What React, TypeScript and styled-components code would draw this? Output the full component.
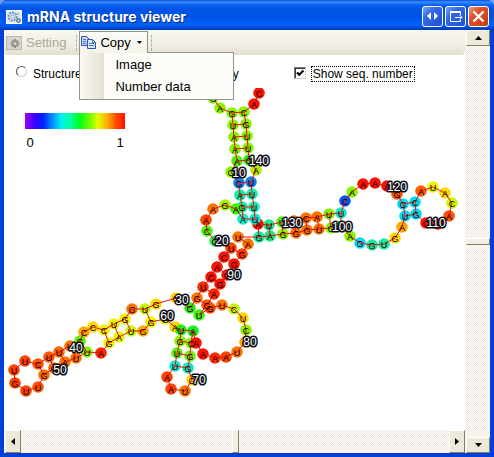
import React from "react";
import styled, { createGlobalStyle, css } from "styled-components";

const GlobalStyle = createGlobalStyle`
  * { box-sizing: border-box; }
  body {
    margin: 0;
    background: #7ba2e7;
    font-family: "Liberation Sans", Arial, sans-serif;
    font-size: 13px;
    color: #000;
  }
  button { font: inherit; color: inherit; margin: 0; }
`;

const Window = styled.main`
  display: flex;
  flex-direction: column;
  min-height: 100vh;
  border-radius: 7px 7px 0 0;
  overflow: hidden;
  background: #0040d8;
`;

const TitleBar = styled.header`
  display: flex;
  align-items: center;
  gap: 5px;
  height: 30px;
  padding: 3px 5px 0 6px;
  background: linear-gradient(
    #0a50d8 0,
    #3a8cff 2px,
    #0a62f0 5px,
    #0054e3 9px,
    #0055e8 18px,
    #0062fb 25px,
    #0048d0 28px,
    #0038b8 30px
  );
`;

const Title = styled.h1`
  flex: 1;
  margin: 0;
  font-family: Inter, "Liberation Sans", sans-serif;
  font-size: 14px;
  font-weight: bold;
  line-height: 20px;
  white-space: nowrap;
  color: #fff;
  text-shadow: 1px 1px 0 #0a2a80;
`;

const CaptionButtons = styled.div`
  display: flex;
  gap: 2px;
`;

const CaptionButton = styled.button<{ $close?: boolean }>`
  display: block;
  width: 21px;
  height: 21px;
  padding: 0;
  border: 1px solid #fff;
  border-radius: 3px;
  background: ${(p) =>
    p.$close
      ? "linear-gradient(135deg, #f0a080, #e0512c 35%, #c83a10)"
      : "linear-gradient(135deg, #7aa4f8, #3468e4 35%, #1c50d0)"};
  svg { display: block; }
`;

const Body = styled.div`
  flex: 1;
  display: grid;
  grid-template-columns: minmax(0, 1fr) 25px;
  margin: 0 4px 4px;
  background: #fff;
`;

const Pane = styled.div`
  display: flex;
  flex-direction: column;
  min-width: 0;
`;

const Toolbar = styled.div`
  display: flex;
  align-items: center;
  height: 25px;
  padding: 0 1px;
  border-radius: 0 0 4px 4px;
  background: linear-gradient(#f8f7f2, #f1eee3 60%, #e3dfcf);
`;

const toolButton = css`
  display: flex;
  align-items: center;
  gap: 4px;
  height: 24px;
  background: none;
  border: 1px solid transparent;
`;

const ToolButton = styled.button`
  ${toolButton}
  padding: 0 6px 0 0;
  &:disabled { color: #aca899; }
`;

const MenuButton = styled.button`
  ${toolButton}
  position: relative;
  z-index: 2;
  width: 69px;
  height: 22px;
  padding: 0 0 0 1px;
  border-color: #8a9a88;
  border-bottom: 0;
  background: linear-gradient(#fcfcf9, #f4f2e9);
  svg:last-child { margin-left: 2px; }
`;

const Separator = styled.span`
  width: 1px;
  height: 16px;
  margin: 0 2px 0 3px;
  border-left: 1px dashed #b4afa0;
`;

const MenuAnchor = styled.div`
  position: relative;
  align-self: flex-start;
  margin-top: 1px;
`;

const Menu = styled.div`
  position: absolute;
  top: 21px;
  left: 0;
  z-index: 1;
  display: flex;
  flex-direction: column;
  width: 155px;
  padding: 0 1px 2px;
  border: 1px solid #8a9a88;
  background: linear-gradient(90deg, #faf9f4 0, #e5e1d2 24px, #fcfcf9 24px);
`;

const MenuItem = styled.button`
  height: 22px;
  padding: 0 0 0 34px;
  border: 0;
  background: none;
  text-align: left;
`;

const Canvas = styled.section`
  flex: 1;
  display: flex;
  flex-direction: column;
  overflow: hidden;
`;

const Options = styled.div`
  display: flex;
  align-items: center;
  height: 33px;
  padding: 4px 0 0 12px;
  font-size: 12px;
`;

const Option = styled.label<{ $gap?: number; $focused?: boolean }>`
  display: flex;
  align-items: center;
  gap: 4px;
  margin-left: ${(p) => p.$gap ?? 0}px;
  white-space: nowrap;
  span {
    padding: 0 1px;
    line-height: 14px;
    border: 1px ${(p) => (p.$focused ? "dotted #000" : "solid transparent")};
  }
`;

const Radio = styled.input`
  appearance: none;
  width: 11px;
  height: 11px;
  margin: 0 0 4px;
  border: 1px solid;
  border-color: #55534a #d8d4c4 #d8d4c4 #55534a;
  border-radius: 50%;
  background: #fff;
`;

const Checkbox = styled.input`
  appearance: none;
  width: 12px;
  height: 12px;
  margin: 0 1px 2px 0;
  border: 1px solid;
  border-color: #77756a #d8d4c4 #d8d4c4 #77756a;
  background: #fff;
  box-shadow: inset 1px 1px 0 #404040;
  &:checked {
    background: #fff
      url("data:image/svg+xml,%3Csvg xmlns='http://www.w3.org/2000/svg' viewBox='0 0 10 10'%3E%3Cpath d='M2 4.5l2.2 2.3L8.5 2.5' fill='none' stroke='%23000' stroke-width='2.2'/%3E%3C/svg%3E");
  }
`;

const Plot = styled.svg`
  display: block;
  flex: none;
  font-family: "Liberation Sans", Arial, sans-serif;
`;

const checker = css`
  background: repeating-conic-gradient(#eeeae0 0 25%, #fdfcfa 0 50%) 0 0 / 2px 2px;
`;

const VScroll = styled.div`
  ${checker}
  display: flex;
  flex-direction: column;
  padding-left: 1px;
`;

const HScroll = styled.div`
  ${checker}
  display: flex;
  height: 23px;
  padding-left: 1px;
`;

const Track = styled.div`
  flex: 1;
  display: flex;
  flex-direction: inherit;
  align-items: stretch;
  justify-content: center;
`;

const ScrollButton = styled.button<{ $wide?: boolean }>`
  display: flex;
  align-items: center;
  justify-content: center;
  width: ${(p) => (p.$wide ? 24 : 16)}px;
  height: ${(p) => (p.$wide ? 16 : 23)}px;
  padding: 0;
  border: 1px solid;
  border-color: #fff #857f62 #857f62 #fff;
  background: #ece9d8;
`;

const Thumb = styled.div<{ $vertical?: boolean }>`
  width: ${(p) => (p.$vertical ? "auto" : "7px")};
  height: ${(p) => (p.$vertical ? "7px" : "auto")};
  border: 1px solid;
  border-color: #fff #857f62 #857f62 #fff;
  background: #f1eee3;
`;

type Base = [x: number, y: number, letter: string, color: string];

const RED = "#fa1400";
const VERM = "#fb4400";
const ORANGE = "#fc7400";
const AMBER = "#ffa800";
const GOLD = "#ffd800";
const YELLOW = "#f0f400";
const LEMON = "#c8f800";
const LIME = "#8cf400";
const GREEN = "#30e810";
const MINT = "#10eca0";
const CYAN = "#00dcf4";
const BLUE = "#1080e8";

const bases: Base[] = [
  [213, 98, "C", LIME], [220, 108, "A", LIME], [232, 113, "G", LIME], [233, 125, "U", LIME],
  [234, 137, "A", LIME], [235, 149, "A", LIME], [237, 161, "A", "#58ec00"], [231, 172, "G", LIME],
  [239, 183, "G", BLUE], [240, 195, "A", MINT], [242, 207, "G", MINT], [243, 219, "A", "#10f0c8"],
  [236, 209, "A", "#44ee00"], [225, 205, "G", "#a8f400"], [213, 209, "A", ORANGE], [206, 220, "A", VERM],
  [207, 231, "C", "#50f010"], [215, 241, "G", "#30e850"], [231, 248, "U", VERM], [224, 257, "C", RED],
  [217, 267, "A", RED], [211, 277, "C", RED], [203, 287, "U", "#fb3000"], [197, 298, "G", ORANGE],
  [190, 308, "G", GREEN], [176, 298, "G", GOLD], [156, 304, "G", GOLD], [145, 309, "U", LEMON],
  [132, 309, "G", ORANGE], [125, 319, "G", YELLOW], [114, 324, "U", YELLOW], [104, 330, "C", YELLOW],
  [93, 327, "C", GOLD], [84, 332, "C", AMBER], [80, 341, "G", "#60f000"], [70, 346, "U", ORANGE],
  [59, 352, "U", "#fb6200"], [49, 357, "U", "#fb5800"], [38, 364, "C", "#fb5800"], [25, 361, "U", VERM],
  [14, 370, "U", VERM], [15, 383, "G", VERM], [26, 391, "U", VERM], [38, 387, "U", "#fb5800"],
  [44, 375, "G", ORANGE], [54, 368, "G", "#fb6200"], [65, 362, "A", ORANGE], [76, 358, "U", ORANGE],
  [87, 352, "U", LIME], [101, 353, "A", "#fb2800"], [109, 343, "G", YELLOW], [119, 337, "A", YELLOW],
  [131, 331, "U", LEMON], [143, 331, "G", AMBER], [151, 322, "G", YELLOW], [165, 319, "G", YELLOW],
  [175, 327, "A", GOLD], [181, 330, "U", GREEN], [180, 341, "G", LIME], [177, 353, "U", "#60f010"],
  [175, 366, "U", "#10e8d0"], [167, 377, "A", VERM], [171, 389, "A", VERM], [185, 391, "U", ORANGE],
  [192, 380, "G", GOLD], [188, 368, "G", "#10e8c0"], [190, 356, "G", "#70f010"], [191, 343, "C", LIME],
  [193, 331, "A", "#18f020"], [196, 343, "A", RED], [203, 354, "A", RED], [215, 358, "A", "#fb3000"],
  [226, 357, "A", VERM], [237, 352, "U", ORANGE], [245, 342, "C", AMBER], [246, 330, "C", LIME],
  [243, 318, "U", GOLD], [234, 309, "C", LEMON], [222, 305, "U", ORANGE], [210, 308, "G", VERM],
  [199, 315, "U", "#40f010"], [207, 305, "G", "#fb5800"], [214, 294, "A", "#fb2800"], [220, 284, "G", RED],
  [227, 275, "G", RED], [234, 264, "G", RED], [242, 254, "G", VERM], [248, 244, "A", ORANGE],
  [238, 237, "U", ORANGE], [259, 237, "G", MINT], [270, 236, "A", "#20e880"], [283, 234, "G", LIME],
  [296, 233, "G", ORANGE], [307, 230, "G", ORANGE], [319, 229, "U", ORANGE], [331, 228, "G", LIME],
  [341, 226, "G", GREEN], [350, 236, "A", LIME], [360, 243, "G", CYAN], [372, 245, "G", MINT],
  [384, 244, "U", MINT], [395, 238, "G", GOLD], [402, 227, "A", AMBER], [405, 216, "U", CYAN],
  [416, 214, "G", CYAN], [426, 223, "C", RED], [438, 224, "A", RED], [449, 216, "A", "#fb5000"],
  [452, 203, "C", LEMON], [445, 193, "A", GOLD], [433, 187, "U", YELLOW], [421, 191, "A", "#fb6000"],
  [415, 202, "C", CYAN], [403, 204, "G", CYAN], [397, 194, "G", "#fb5800"], [387, 186, "A", RED],
  [375, 183, "A", RED], [363, 184, "A", RED], [352, 192, "A", LIME], [345, 201, "C", "#0858f0"],
  [341, 213, "U", "#10e8d0"], [329, 214, "U", LIME], [317, 217, "A", ORANGE], [306, 218, "C", ORANGE],
  [294, 221, "C", "#fb6200"], [282, 222, "U", "#50f010"], [269, 225, "U", "#20e890"], [258, 224, "A", RED],
  [255, 219, "U", "#10e8d0"], [254, 207, "U", "#10f0b0"], [252, 194, "U", "#10f0b0"], [251, 182, "U", BLUE],
  [256, 170, "A", "#b0f000"], [249, 160, "G", GREEN], [248, 148, "U", LIME], [247, 136, "U", LIME],
  [246, 124, "G", LIME], [244, 112, "C", LIME], [254, 104, "A", RED], [259, 93, "C", RED],
];

/* Segments between paired bases: x1, y1, x2, y2. */
const pairs: number[][] = [
  [232, 113, 244, 112], [233, 125, 246, 124], [234, 137, 247, 136], [235, 149, 248, 148],
  [237, 161, 249, 160], [239, 183, 251, 182], [240, 195, 252, 194], [242, 207, 254, 207],
  [243, 219, 255, 219], [231, 248, 242, 254], [224, 257, 234, 264], [217, 267, 227, 275],
  [211, 277, 220, 284], [203, 287, 214, 294], [197, 298, 207, 305], [145, 309, 151, 322],
  [125, 319, 131, 331], [114, 324, 119, 337], [104, 330, 109, 343], [80, 341, 87, 352],
  [70, 346, 76, 358], [59, 352, 65, 362], [49, 357, 54, 368], [38, 364, 44, 375],
  [181, 330, 193, 331], [180, 341, 191, 343], [177, 353, 190, 356], [175, 366, 188, 368],
  [258, 224, 259, 237], [269, 225, 270, 236], [282, 222, 283, 234], [294, 221, 296, 233],
  [306, 218, 307, 230], [317, 217, 319, 229], [329, 214, 331, 228], [341, 213, 341, 226],
  [405, 216, 403, 204], [416, 214, 415, 202],
];

const marks: [number, number, number][] = [
  [10, 239, 173], [20, 222, 241], [30, 182, 300], [40, 76, 348], [50, 60, 370],
  [60, 167, 316], [70, 199, 380], [80, 250, 342], [90, 234, 275], [100, 342, 227],
  [110, 436, 223], [120, 397, 187], [130, 292, 223], [140, 259, 161],
];

const spectrum = ["#a000ff", "#4000ff", "#0020ff", "#0090ff", "#00f0f0", "#00ffa0", "#00ff20", "#60ff00", "#e0ff00", "#ffb000", "#ff5000", "#ff1000"];

function StructurePlot() {
  return (
    <Plot width="460" height="340" viewBox="4 88 460 340" role="img" aria-label="mRNA secondary structure">
      <defs>
        <linearGradient id="spectrum">
          {spectrum.map((c, i) => (
            <stop key={c} offset={i / (spectrum.length - 1)} stopColor={c} />
          ))}
        </linearGradient>
      </defs>
      <rect x="25" y="113" width="100" height="16" fill="url(#spectrum)" />
      <g fontSize="13" textAnchor="middle">
        <text x="30" y="147">0</text>
        <text x="120" y="147">1</text>
      </g>
      {bases.map(([x, y, , color], i) => (
        <circle key={i} cx={x} cy={y} r="5.8" fill={color} />
      ))}
      <g stroke="#f01010" strokeWidth="1" fill="none">
        <polyline points={bases.map(([x, y]) => `${x},${y}`).join(" ")} />
        {pairs.map(([x1, y1, x2, y2], i) => (
          <line key={i} x1={x1} y1={y1} x2={x2} y2={y2} />
        ))}
      </g>
      <g fontSize="9" textAnchor="middle">
        {bases.map(([x, y, letter], i) => (
          <text key={i} x={x} y={y + 4}>{letter}</text>
        ))}
      </g>
      <g fontSize="12" textAnchor="middle" fill="#fff" stroke="#0a0a14" strokeWidth="3" strokeLinejoin="round" paintOrder="stroke">
        {marks.map(([n, x, y]) => (
          <text key={n} x={x} y={y + 4}>{n}</text>
        ))}
      </g>
    </Plot>
  );
}

function AppIcon() {
  return (
    <svg width="16" height="14" viewBox="0 0 16 14" aria-hidden="true">
      <rect x=".5" y=".5" width="15" height="13" fill="#dfeaf6" stroke="#fff" />
      <circle cx="6.5" cy="6.5" r="4" fill="none" stroke="#6f93b8" strokeWidth="2" strokeDasharray="2 1" />
      <circle cx="6.5" cy="6.5" r="1.6" fill="#fff" stroke="#7f9fc0" />
      <circle cx="12.5" cy="10.5" r="1.7" fill="#fff" stroke="#34608c" strokeWidth="1.2" />
      <circle cx="12" cy="4" r="1" fill="#9ab4cc" />
    </svg>
  );
}

function SettingIcon() {
  return (
    <svg width="16" height="14" viewBox="0 0 16 14" aria-hidden="true">
      <rect x=".5" y=".5" width="15" height="13" fill="#d8d6ce" stroke="#bab7ac" />
      <g stroke="#918f88" strokeWidth="2">
        <path d="M9 3v9M4.500 7.500h9M6 4.500l6 6M12 4.500l-6 6" />
      </g>
      <circle cx="9" cy="7.500" r="1.500" fill="#d8d6ce" />
    </svg>
  );
}

function CopyIcon() {
  return (
    <svg width="15" height="13" viewBox="0 0 15 13" aria-hidden="true">
      <g fill="#c4d8f8" stroke="#2c54b0">
        <path d="M.5.5h5l2.500 2.500v6.500H.5z" />
        <path d="M6.500 3.500h5l3 3v6h-8z" fill="#dbe8fb" />
        <path d="M11.500 3.500v3h3M2 3.500h3M2 5.500h3M2 7.500h3M8 7.500h5M8 9.500h5" fill="none" stroke="#4c78c8" />
      </g>
    </svg>
  );
}

const arrowPaths = {
  up: "M0 4h7L3.500 0z",
  down: "M0 0h7L3.500 4z",
  left: "M4 0v7L0 3.500z",
  right: "M0 0v7l4-3.500z",
};

function Arrow({ to }: { to: keyof typeof arrowPaths }) {
  const flat = to === "up" || to === "down";
  return (
    <svg width={flat ? 7 : 4} height={flat ? 4 : 7} aria-hidden="true">
      <path d={arrowPaths[to]} />
    </svg>
  );
}

export default function App() {
  return (
    <>
      <GlobalStyle />
      <Window>
        <TitleBar>
          <AppIcon />
          <Title>mRNA structure viewer</Title>
          <CaptionButtons>
            <CaptionButton aria-label="Resize">
              <svg width="19" height="19" fill="#fff"><path d="M8 5v8L4 9zM11 5v8l4-4z" /></svg>
            </CaptionButton>
            <CaptionButton aria-label="Detach">
              <svg width="19" height="19" fill="none" stroke="#fff">
                <path d="M4 5h11" strokeWidth="2" />
                <path d="M4.500 6v8.500h10V13M14.500 6v2M9 10.500h7M13.500 8l2.500 2.500-2.500 2.500" />
              </svg>
            </CaptionButton>
            <CaptionButton $close aria-label="Close">
              <svg width="19" height="19" stroke="#fff" strokeWidth="2.400"><path d="M4.500 4.500l10 10M14.500 4.500l-10 10" /></svg>
            </CaptionButton>
          </CaptionButtons>
        </TitleBar>
        <Body>
          <Pane>
            <Toolbar role="toolbar">
              <ToolButton disabled><SettingIcon />Setting</ToolButton>
              <Separator />
              <MenuAnchor>
                <MenuButton aria-haspopup="menu" aria-expanded="true">
                  <CopyIcon />Copy
                  <svg width="5" height="3" aria-hidden="true"><path d="M0 0h5L2.500 3z" /></svg>
                </MenuButton>
                <Menu role="menu">
                  <MenuItem role="menuitem">Image</MenuItem>
                  <MenuItem role="menuitem">Number data</MenuItem>
                </Menu>
              </MenuAnchor>
              <Separator />
            </Toolbar>
            <Canvas>
              <Options>
                <Option><Radio type="radio" name="view" /><span>Structure</span></Option>
                <Option $gap={82}><Radio type="radio" name="view" /><span>Probability</span></Option>
                <Option $gap={53} $focused><Checkbox type="checkbox" defaultChecked /><span>Show seq. number</span></Option>
              </Options>
              <StructurePlot />
            </Canvas>
            <HScroll>
              <ScrollButton aria-label="Scroll left"><Arrow to="left" /></ScrollButton>
              <Track><Thumb /></Track>
              <ScrollButton aria-label="Scroll right"><Arrow to="right" /></ScrollButton>
            </HScroll>
          </Pane>
          <VScroll>
            <ScrollButton $wide aria-label="Scroll up"><Arrow to="up" /></ScrollButton>
            <Track><Thumb $vertical /></Track>
            <ScrollButton $wide aria-label="Scroll down"><Arrow to="down" /></ScrollButton>
          </VScroll>
        </Body>
      </Window>
    </>
  );
}
